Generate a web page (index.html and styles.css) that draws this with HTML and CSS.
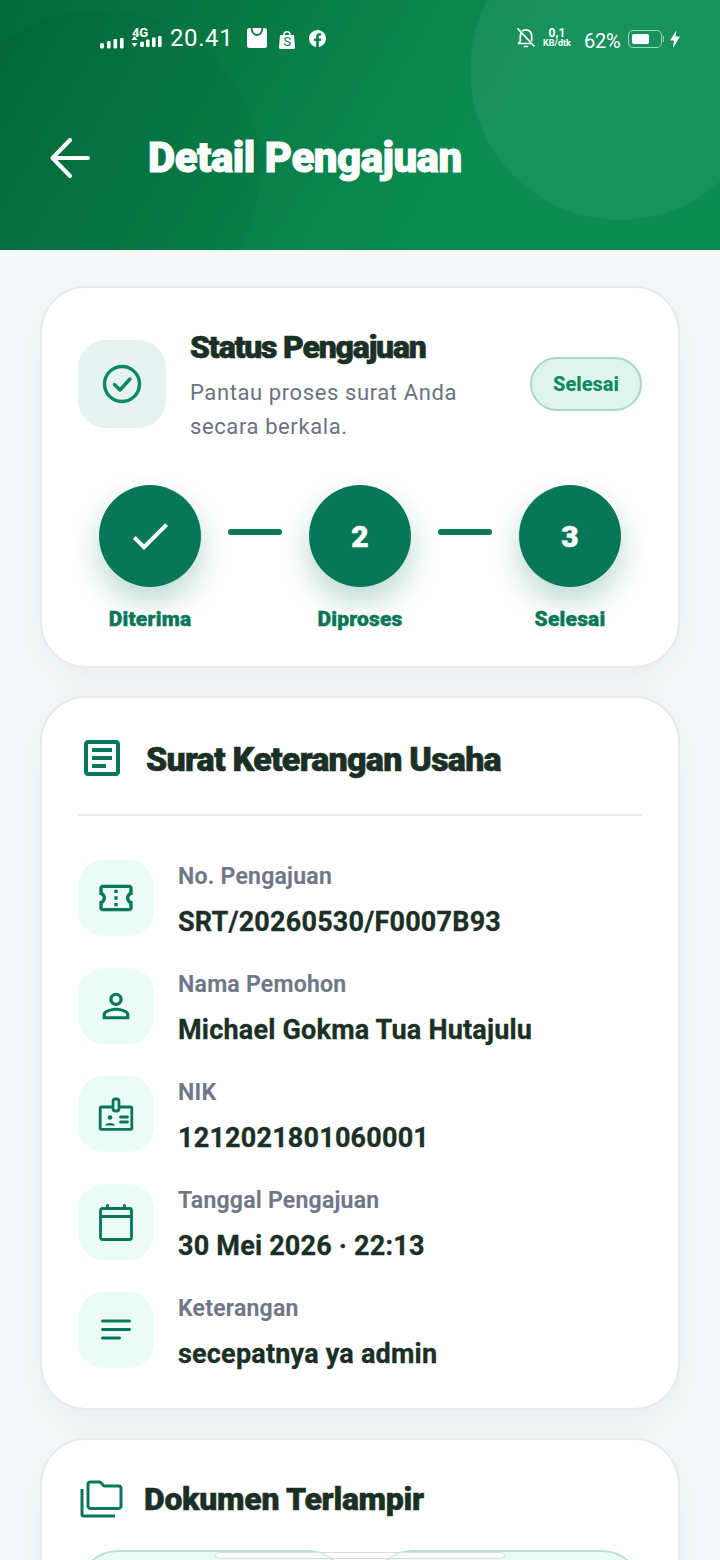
FILE: index.html
```html
<!DOCTYPE html>
<html lang="id">
<head>
<meta charset="utf-8">
<title>Detail Pengajuan</title>
<link rel="stylesheet" href="styles.css">
</head>
<body>
<div class="screen">
  <header class="hero">
    <div class="blob blob-left"></div>
    <div class="blob blob-right"></div>
    <div class="statusbar">
      <div class="status-left">
        <svg class="sig1" width="24" height="12" viewBox="0 0 24 12" fill="#fff"><rect x="0" y="6" width="4" height="5.500" rx="1.500"/><rect x="7" y="4" width="3.600" height="7.500" rx="1"/><rect x="13.500" y="2" width="3.600" height="9.500" rx="1"/><rect x="20" y="1" width="3.600" height="10.500" rx="1"/></svg>
        <div class="sig2">
          <span class="net">4G</span>
          <svg width="33" height="13" viewBox="0 0 33 13" fill="#fff"><path d="M3.500 1 6.500 5H.5zM3.500 12 .5 8h6z"/><rect x="9" y="6.500" width="4" height="5.500" rx="1.500"/><rect x="15" y="4.500" width="3.600" height="7.500" rx="1"/><rect x="21" y="2.500" width="3.600" height="9.500" rx="1"/><rect x="27" y="1" width="3.600" height="11" rx="1"/></svg>
        </div>
        <span class="clock">20.41</span>
        <svg class="app-a" width="20" height="20" viewBox="0 0 20 20"><path d="M2.500 0H17.500A2.500 2.500 0 0 1 20 2.500V17.500A2.500 2.500 0 0 1 17.500 20H2.500A2.500 2.500 0 0 1 0 17.500V2.500A2.500 2.500 0 0 1 2.500 0Z" fill="#fff"/><path d="M4.500 0C5 5 7.500 7 10 7S15 5 15.500 0" fill="none" stroke="#0a7a48" stroke-width="1.800"/></svg>
        <div class="app-b">
          <svg width="16" height="19" viewBox="0 0 16 19"><path d="M5 5C5 .5 11 .5 11 5" fill="none" stroke="#fff" stroke-width="1.500"/><path d="M1 5H15L16 17.500A1.500 1.500 0 0 1 14.500 19H1.500A1.500 1.500 0 0 1 0 17.500Z" fill="#fff"/></svg>
          <span class="app-s">S</span>
        </div>
        <svg class="app-c" width="17" height="17" viewBox="0 0 24 24"><path fill="#fff" d="M24 12.070C24 5.400 18.630 0 12 0S0 5.400 0 12.070C0 18.100 4.390 23.100 10.130 24v-8.440H7.080v-3.490h3.050V9.410c0-3.020 1.790-4.690 4.530-4.690 1.310 0 2.680.24 2.680.24v2.970h-1.510c-1.490 0-1.960.93-1.960 1.880v2.260h3.330l-.53 3.490h-2.800V24C19.610 23.100 24 18.100 24 12.070z"/></svg>
      </div>
      <div class="status-right">
        <svg class="bell" width="18" height="20" viewBox="0 0 18 20" fill="none" stroke="#fff" stroke-width="1.700" stroke-linecap="round" stroke-linejoin="round"><path d="M4 5.500C3.500 6.500 3.300 7.500 3.300 9V13L1.500 15.500H13.500"/><path d="M5.500 2.700C9.500 .5 14.700 2.500 14.700 8V12.500"/><path d="M1 .8 17 18"/><path d="M7.500 18.500H10.500"/></svg>
        <div class="speed"><span class="speed-num">0,1</span><span class="speed-unit">KB/dtk</span></div>
        <span class="pct">62%</span>
        <div class="battery"><div class="battery-level"></div></div>
        <div class="battery-tip"></div>
        <svg class="bolt" width="10" height="18" viewBox="0 0 10 18" fill="#fff"><path d="M6.500 0 0 10.500H4L3 18 10 6.500H5.500Z"/></svg>
      </div>
    </div>
    <div class="titlebar">
      <svg class="back" width="40" height="40" viewBox="0 0 40 40" fill="none" stroke="#fff" stroke-width="4" stroke-linecap="round" stroke-linejoin="round"><path d="M38 20H3"/><path d="M20 2 2.500 20 20 38"/></svg>
      <h1 class="title">Detail Pengajuan</h1>
    </div>
  </header>

  <main class="content">
    <section class="card card-status">
      <div class="status-head">
        <div class="status-icon">
          <svg width="40" height="40" viewBox="0 0 40 40" fill="none" stroke="#0b8a62" stroke-width="3.400" stroke-linecap="round" stroke-linejoin="round"><circle cx="20" cy="20" r="17.500"/><path d="M12.500 20.500 18 26 28 15"/></svg>
        </div>
        <div class="status-text">
          <h2 class="status-title">Status Pengajuan</h2>
          <p class="status-sub">Pantau proses surat Anda secara berkala.</p>
        </div>
        <span class="badge">Selesai</span>
      </div>
      <div class="stepper">
        <div class="step">
          <div class="step-circle"><svg width="48" height="48" viewBox="0 0 24 24" fill="#fff"><path d="M9 16.170 4.830 12l-1.420 1.410L9 19 21 7l-1.410-1.410z"/></svg></div>
          <span class="step-label">Diterima</span>
        </div>
        <div class="connector"></div>
        <div class="step">
          <div class="step-circle">2</div>
          <span class="step-label">Diproses</span>
        </div>
        <div class="connector"></div>
        <div class="step">
          <div class="step-circle">3</div>
          <span class="step-label">Selesai</span>
        </div>
      </div>
    </section>

    <section class="card card-detail">
      <div class="detail-head">
        <svg width="48" height="48" viewBox="0 0 24 24" fill="#087758"><path d="M19 5v14H5V5h14m0-2H5c-1.100 0-2 .9-2 2v14c0 1.100.9 2 2 2h14c1.100 0 2-.9 2-2V5c0-1.100-.9-2-2-2z"/><path d="M14 17H7v-2h7v2zm3-4H7v-2h10v2zm0-4H7V7h10v2z"/></svg>
        <h2 class="section-title">Surat Keterangan Usaha</h2>
      </div>
      <div class="rows">
        <div class="row">
          <div class="row-icon"><svg width="40" height="40" viewBox="0 0 24 24" fill="#087758"><path d="M22 10V6c0-1.110-.9-2-2-2H4c-1.100 0-1.990.89-1.990 2v4c1.100 0 1.990.9 1.990 2s-.89 2-2 2v4c0 1.100.9 2 2 2h16c1.100 0 2-.9 2-2v-4c-1.100 0-2-.9-2-2s.9-2 2-2zm-2-1.460c-1.190.69-2 1.990-2 3.460s.81 2.770 2 3.460V18H4v-2.540c1.190-.69 2-1.990 2-3.460 0-1.480-.8-2.770-1.990-3.460L4 6h16v2.540z"/><path d="M11 15h2v2h-2zm0-4h2v2h-2zm0-4h2v2h-2z"/></svg></div>
          <div class="row-text"><span class="row-label">No. Pengajuan</span><span class="row-value">SRT/20260530/F0007B93</span></div>
        </div>
        <div class="row">
          <div class="row-icon"><svg width="40" height="40" viewBox="0 0 24 24" fill="#087758"><path d="M12 5.900c1.160 0 2.100.94 2.100 2.100s-.94 2.100-2.100 2.100S9.900 9.160 9.900 8s.94-2.100 2.100-2.100m0 9c2.970 0 6.100 1.460 6.100 2.100v1.100H5.900V17c0-.64 3.130-2.100 6.100-2.100M12 4C9.790 4 8 5.790 8 8s1.790 4 4 4 4-1.790 4-4-1.790-4-4-4zm0 9c-2.670 0-8 1.340-8 4v3h16v-3c0-2.660-5.330-4-8-4z"/></svg></div>
          <div class="row-text"><span class="row-label">Nama Pemohon</span><span class="row-value">Michael Gokma Tua Hutajulu</span></div>
        </div>
        <div class="row">
          <div class="row-icon"><svg width="40" height="40" viewBox="0 0 40 40" fill="none" stroke="#087758" stroke-width="2.800" stroke-linejoin="round" stroke-linecap="round"><path d="M16.500 13H5.500A1.300 1.300 0 0 0 4.200 14.300V34A1.300 1.300 0 0 0 5.500 35.300H34.500A1.300 1.300 0 0 0 35.800 34V14.300A1.300 1.300 0 0 0 34.500 13H23.500"/><rect x="17" y="5" width="6" height="12" rx="2.500"/><path d="M24.500 23H31.500M24.500 28H31.500"/><circle cx="14" cy="23.500" r="2.300" fill="#087758" stroke="none"/><path d="M9 31.500C9 28 19 28 19 31.500Z" fill="#087758" stroke="none"/></svg></div>
          <div class="row-text"><span class="row-label">NIK</span><span class="row-value">1212021801060001</span></div>
        </div>
        <div class="row">
          <div class="row-icon"><svg width="40" height="40" viewBox="0 0 40 40" fill="none" stroke="#087758" stroke-width="2.800" stroke-linejoin="round" stroke-linecap="round"><rect x="4.500" y="6.500" width="31" height="31" rx="2"/><path d="M4.500 14.500H35.500"/><path d="M11.500 3.500V6.500M28.500 3.500V6.500"/></svg></div>
          <div class="row-text"><span class="row-label">Tanggal Pengajuan</span><span class="row-value">30 Mei 2026 · 22:13</span></div>
        </div>
        <div class="row">
          <div class="row-icon"><svg width="40" height="40" viewBox="0 0 40 40" fill="#087758"><rect x="5" y="9.500" width="30" height="3" rx="1.500"/><rect x="5" y="18" width="30" height="3" rx="1.500"/><rect x="5" y="26.500" width="20" height="3" rx="1.500"/></svg></div>
          <div class="row-text"><span class="row-label">Keterangan</span><span class="row-value">secepatnya ya admin</span></div>
        </div>
      </div>
    </section>

    <section class="card card-docs">
      <div class="docs-head">
        <svg width="44" height="38" viewBox="0 0 44 38" fill="none" stroke="#087758" stroke-width="3" stroke-linejoin="round"><path d="M8 4.500A2.500 2.500 0 0 1 10.500 2H20L24 6H38.500A2.500 2.500 0 0 1 41 8.500V26A2.500 2.500 0 0 1 38.500 28.500H10.500A2.500 2.500 0 0 1 8 26Z"/><path d="M2 9V34.500A1.500 1.500 0 0 0 3.500 36H35"/></svg>
        <h2 class="docs-title">Dokumen Terlampir</h2>
      </div>
      <div class="doc-grid">
        <div class="doc-chip"></div>
        <div class="doc-chip"></div>
      </div>
    </section>
  </main>
  <div class="home-pill"></div>
</div>
</body>
</html>
```
FILE: styles.css
```css
* { box-sizing: border-box; }
html, body { margin: 0; padding: 0; }
body {
  width: 720px;
  height: 1560px;
  overflow: hidden;
  font-family: Roboto, "Liberation Sans", sans-serif;
  background: #f5f9f9;
}
h1, h2, p { margin: 0; }

.screen { position: relative; width: 720px; height: 1560px; overflow: hidden; }

.hero {
  position: relative;
  height: 250px;
  overflow: hidden;
  background: linear-gradient(120deg, #04693a 0%, #0a8c52 65%, #0a8c52 100%);
  color: #fff;
}
.blob { position: absolute; border-radius: 50%; }
.blob-left { left: -60px; top: 10px; width: 320px; height: 320px; background: rgba(0, 60, 30, 0.06); }
.blob-right { left: 470px; top: -80px; width: 300px; height: 300px; background: rgba(255, 255, 255, 0.06); }

.statusbar {
  position: relative;
  display: flex;
  justify-content: space-between;
  align-items: center;
  height: 24px;
  margin-top: 26px;
  padding: 0 40px 0 100px;
}
.status-left, .status-right { display: flex; align-items: center; }
.sig1 { margin-top: 9px; }
.sig2 { position: relative; width: 33px; height: 24px; margin-left: 7px; }
.sig2 svg { position: absolute; left: 0; bottom: 2px; }
.net { position: absolute; left: 1px; top: 1px; font-size: 13px; font-weight: 700; line-height: 12px; letter-spacing: -0.3px; }
.clock { margin-left: 6px; font-size: 24px; letter-spacing: 0.6px; line-height: 24px; }
.app-a { margin-left: 14px; }
.app-b { position: relative; width: 16px; height: 19px; margin-left: 12px; margin-top: 2px; }
.app-s {
  position: absolute;
  left: 0;
  right: 0;
  top: 5px;
  text-align: center;
  font-size: 13px;
  line-height: 14px;
  color: #0a7a48;
}
.app-c { margin-left: 14px; margin-top: 1px; }
.bell { margin-right: 7px; }
.speed { display: flex; flex-direction: column; align-items: center; width: 30px; margin-right: 12px; font-weight: 700; }
.speed-num { font-size: 12px; line-height: 10px; }
.speed-unit { font-size: 9px; line-height: 11px; white-space: nowrap; }
.pct { margin-top: 6px; margin-right: 7px; font-size: 20px; line-height: 24px; letter-spacing: -0.2px; }
.battery {
  width: 34px;
  height: 18px;
  margin-top: 2px;
  padding: 3px;
  border: 1.5px solid rgba(255, 255, 255, 0.6);
  border-radius: 5px;
}
.battery-level { width: 17px; height: 100%; border-radius: 2px; background: #fff; }
.battery-tip { width: 1.5px; height: 6px; margin-left: 1px; margin-top: 2px; background: rgba(255, 255, 255, 0.6); }
.bolt { margin-left: 6px; margin-top: 2px; }

.titlebar {
  position: relative;
  display: flex;
  align-items: center;
  height: 60px;
  margin-top: 78px;
  padding-left: 50px;
}
.title {
  margin-left: 58px;
  font-size: 42px;
  font-weight: 900;
  letter-spacing: -0.5px;
  line-height: 60px;
  -webkit-text-stroke: 1px #fff;
}

.content { display: flex; flex-direction: column; gap: 28px; padding: 36px 40px 0; }
.card {
  background: #fff;
  border: 2px solid #e6ebf0;
  border-radius: 46px;
  box-shadow: 0 14px 40px rgba(20, 60, 50, 0.06);
}
.card-status { height: 382px; padding: 52px 36px 0; }
.status-head { display: flex; align-items: center; height: 88px; }
.status-icon {
  flex: none;
  display: flex;
  align-items: center;
  justify-content: center;
  width: 88px;
  height: 88px;
  border-radius: 28px;
  background: #e6f3f0;
}
.status-text { flex: 1; align-self: flex-start; margin-left: 24px; margin-top: -12px; min-width: 0; }
.status-title {
  color: #1a3025;
  font-size: 32px;
  font-weight: 900;
  letter-spacing: -1.2px;
  line-height: 38px;
  -webkit-text-stroke: 0.6px #1a3025;
}
.status-sub {
  max-width: 300px;
  margin-top: 10px;
  color: #6b7280;
  font-size: 22px;
  letter-spacing: 0.6px;
  line-height: 34px;
}
.badge {
  flex: none;
  width: 112px;
  height: 54px;
  border: 2px solid #a7d9c6;
  border-radius: 27px;
  background: #e0f3ec;
  color: #0b8a62;
  font-size: 20px;
  font-weight: 800;
  line-height: 50px;
  text-align: center;
}

.stepper { display: flex; margin-top: 57px; padding-left: 21px; }
.step { display: flex; flex-direction: column; align-items: center; width: 102px; }
.step-circle {
  display: flex;
  align-items: center;
  justify-content: center;
  width: 102px;
  height: 102px;
  border-radius: 50%;
  background: #087758;
  box-shadow: 0 14px 30px rgba(8, 119, 88, 0.28);
  color: #fff;
  font-size: 30px;
  font-weight: 900;
  -webkit-text-stroke: 0.5px #fff;
}
.step-label {
  margin-top: 19px;
  color: #087758;
  font-size: 21px;
  font-weight: 900;
  letter-spacing: 0.2px;
  line-height: 26px;
  white-space: nowrap;
  -webkit-text-stroke: 0.4px #087758;
}
.connector {
  flex: none;
  width: 54px;
  height: 6px;
  margin: 44px 27px 0;
  border-radius: 3px;
  background: #087758;
}

.card-detail { height: 714px; padding: 0 36px; }
.detail-head {
  display: flex;
  align-items: center;
  height: 118px;
  padding-top: 6px;
  border-bottom: 2px solid #e6ebf0;
}
.detail-head svg { margin-top: -2px; }
.section-title {
  margin-left: 20px;
  color: #1a3025;
  font-size: 34px;
  font-weight: 900;
  letter-spacing: -0.75px;
  line-height: 44px;
  -webkit-text-stroke: 0.6px #1a3025;
}
.rows { display: flex; flex-direction: column; gap: 32px; padding-top: 44px; }
.row { display: flex; height: 76px; }
.row-icon {
  flex: none;
  display: flex;
  align-items: center;
  justify-content: center;
  width: 76px;
  height: 76px;
  border-radius: 26px;
  background: #ebfcf6;
}
.row-text { display: flex; flex-direction: column; margin-left: 24px; padding-top: 1px; }
.row-label { color: #6f7787; font-size: 23px; font-weight: 600; letter-spacing: 0.25px; line-height: 32px; -webkit-text-stroke: 0.2px #6f7787; }
.row-value { margin-top: 12px; color: #1a3025; font-size: 27px; font-weight: 700; letter-spacing: 0.2px; line-height: 34px; -webkit-text-stroke: 0.3px #1a3025; }

.card-docs { height: 300px; padding: 0 36px; }
.docs-head { display: flex; align-items: center; height: 118px; margin-left: 2px; }
.docs-title {
  margin-left: 20px;
  color: #1a3025;
  font-size: 32px;
  font-weight: 900;
  letter-spacing: -0.3px;
  line-height: 40px;
  -webkit-text-stroke: 0.5px #1a3025;
}
.doc-grid { display: grid; grid-template-columns: 1fr 1fr; gap: 24px; margin-top: -8px; }
.doc-chip { height: 120px; border: 2px solid #b9e2d2; border-radius: 40px; background: #ebfcf6; }

.home-pill {
  position: absolute;
  left: 215px;
  top: 1552px;
  width: 290px;
  height: 7px;
  border: 1px solid #d8dcdc;
  border-radius: 4px;
  background: rgba(255, 255, 255, 0.5);
}
```
